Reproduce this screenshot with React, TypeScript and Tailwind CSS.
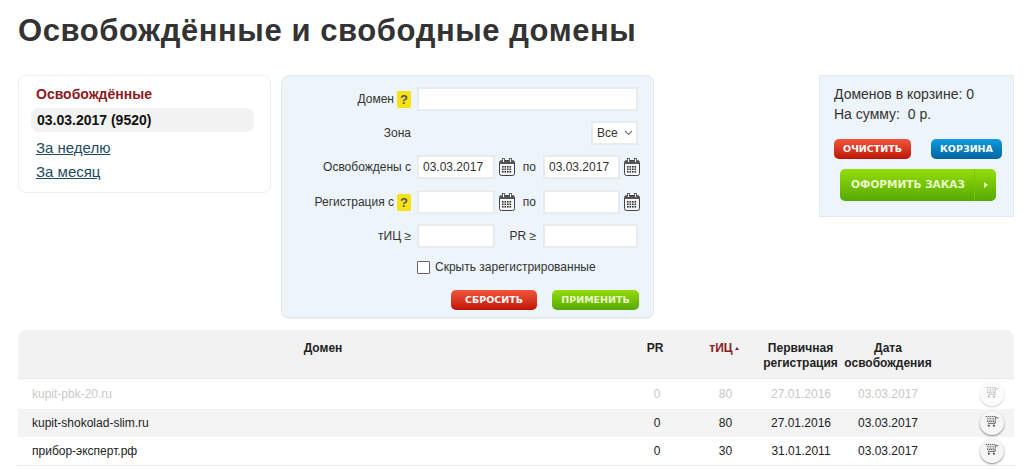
import React from "react";

function Cal() {
  return (
    <svg width="16" height="18" viewBox="0 0 16 18" className="shrink-0">
      <rect x="0.5" y="2.5" width="15" height="15" rx="2" fill="#f4f6f8" stroke="#444" />
      <rect x="1" y="3" width="14" height="3" fill="#555" />
      <rect x="3.5" y="0.5" width="2" height="4" fill="#fff" stroke="#444" strokeWidth="0.8" />
      <rect x="10.5" y="0.5" width="2" height="4" fill="#fff" stroke="#444" strokeWidth="0.8" />
      {[8, 10.5, 13].map((y) =>
        [3, 5.5, 8, 10.5].map((x) => <rect key={`${x}-${y}`} x={x} y={y} width="1.6" height="1.6" fill="#333" />)
      )}
    </svg>
  );
}

function Q() {
  return (
    <span className="inline-flex h-[17px] w-[14px] items-center justify-center rounded-[2px] bg-[#f7e117] text-[13px] font-bold leading-none text-[#555]">
      ?
    </span>
  );
}

function Input({ value, w = "w-[77px]" }: { value?: string; w?: string }) {
  return (
    <div className={`flex h-[24px] ${w} items-center border-2 border-[#e8ecef] bg-white pl-[4px] text-[12px] text-[#333]`}>
      {value}
    </div>
  );
}

function Cart({ faded }: { faded?: boolean }) {
  return (
    <div className={`flex h-[24px] w-[24px] items-center justify-center rounded-full bg-[#f6f6f6] pb-[3px] shadow-[0_1px_2px_rgba(0,0,0,0.45)] ${faded ? "opacity-40" : ""}`}>
      <svg width="14" height="11" viewBox="0 0 15 12">
        <path d="M0.5 0.5H11.5L11 6H2" fill="none" stroke="#555" strokeWidth="1" strokeDasharray="1.5 0.7" />
        <path d="M2 2.5H11M2 4.5H11" stroke="#555" strokeWidth="1" strokeDasharray="1 0.7" />
        <path d="M11.5 2H14.5M11 6.5V8H3" fill="none" stroke="#555" strokeWidth="1" />
        <rect x="3" y="9.5" width="2" height="2" fill="#444" />
        <rect x="8.5" y="9.5" width="2" height="2" fill="#444" />
      </svg>
    </div>
  );
}

const btn = "flex items-center justify-center rounded-[5px] font-['DejaVu_Sans',sans-serif] text-[9.5px] font-bold bg-linear-to-b";
const rowCols = "grid grid-cols-[609px_60px_77px_74px_100px_76px] items-center text-[12px]";

function Row({ name, tic, reg, cls, faded }: { name: string; tic: string; reg: string; cls: string; faded?: boolean }) {
  return (
    <div className={`${rowCols} ${cls} ${faded ? "text-[#c8c8c8]" : "text-[#222]"}`}>
      <div className="pl-[14px]">{name}</div>
      <div className="text-center">0</div>
      <div className="text-center">{tic}</div>
      <div className="text-center">{reg}</div>
      <div className="text-center">03.03.2017</div>
      <div className="flex justify-end pr-[10px]">
        <Cart faded={faded} />
      </div>
    </div>
  );
}

export default function App() {
  return (
    <div className="h-[469px] w-[1032px] overflow-hidden bg-white px-[18px] pt-[12px] font-['Liberation_Sans',Arial,sans-serif] text-[#333]">
      <h1 className="h-[63px] text-[31px] font-bold leading-[38px] tracking-[0.58px] text-[#333]">Освобождённые и свободные домены</h1>

      <div className="flex items-start">
        <div className="h-[118px] w-[253px] rounded-[8px] border border-[#eceef0] px-[12px] pt-[9px]">
          <div className="pl-[5px] text-[14px] font-bold leading-[18px] text-[#8c1a22]">Освобождённые</div>
          <div className="mt-[5px] flex h-[24px] w-[223px] items-center rounded-[8px] bg-[#f2f2f2] pl-[6px] text-[14px] font-bold text-[#111]">
            03.03.2017 (9520)
          </div>
          <div className="mt-[4px] pl-[5px] text-[15px] leading-[24px] text-[#1f4a63] underline">За неделю</div>
          <div className="pl-[5px] text-[15px] leading-[24px] text-[#1f4a63] underline">За месяц</div>
        </div>

        <div className="ml-[10px] h-[243px] w-[373px] rounded-[8px] border border-[#e2eaf1] bg-[#edf4fa] pl-[26px] pt-[11px] text-[12px] text-[#333] shadow-[0_1px_1px_rgba(0,0,0,0.08)]">
          <div className="flex h-[24px] items-center">
            <div className="flex w-[103px] items-center justify-end gap-[3px]">Домен <Q /></div>
            <div className="ml-[6px]"><Input w="w-[221px]" /></div>
          </div>
          <div className="mt-[10px] flex h-[24px] items-center">
            <div className="w-[103px] text-right">Зона</div>
            <div className="ml-[180px] flex h-[24px] w-[47px] items-center justify-between border-2 border-[#e8ecef] bg-white pl-[4px] pr-[3px]">
              Все
              <svg width="9" height="6" viewBox="0 0 9 6"><path d="M1 1l3.5 3.5L8 1" fill="none" stroke="#777" strokeWidth="1.2" /></svg>
            </div>
          </div>
          <div className="mt-[10px] flex h-[24px] items-center">
            <div className="w-[103px] text-right">Освобождены с</div>
            <div className="ml-[6px]"><Input value="03.03.2017" w="w-[78px]" /></div>
            <div className="ml-[4px]"><Cal /></div>
            <div className="w-[21px] text-right">по</div>
            <div className="ml-[7px]"><Input value="03.03.2017" /></div>
            <div className="ml-[4px]"><Cal /></div>
          </div>
          <div className="mt-[11px] flex h-[24px] items-center">
            <div className="flex w-[103px] items-center justify-end gap-[3px]">Регистрация с <Q /></div>
            <div className="ml-[6px]"><Input w="w-[78px]" /></div>
            <div className="ml-[4px]"><Cal /></div>
            <div className="w-[21px] text-right">по</div>
            <div className="ml-[7px]"><Input /></div>
            <div className="ml-[4px]"><Cal /></div>
          </div>
          <div className="mt-[10px] flex h-[24px] items-center">
            <div className="w-[103px] text-right">тИЦ ≥</div>
            <div className="ml-[6px]"><Input w="w-[78px]" /></div>
            <div className="w-[41px] text-right">PR ≥</div>
            <div className="ml-[7px]"><Input w="w-[95px]" /></div>
          </div>
          <div className="ml-[109px] mt-[9px] flex h-[20px] items-center gap-[5px]">
            <span className="h-[13px] w-[13px] rounded-[1px] border border-[#666] bg-white" />
            <span>Скрыть зарегистрированные</span>
          </div>
          <div className="ml-[143px] mt-[13px] flex gap-[15px]">
            <div className={`${btn} h-[20px] w-[86px] from-[#f0543a] to-[#c00f00] text-white`}>СБРОСИТЬ</div>
            <div className={`${btn} h-[20px] w-[87px] from-[#94dd0a] to-[#55a904] text-[#e9f7c8]`}>ПРИМЕНИТЬ</div>
          </div>
        </div>

        <div className="ml-[165px] h-[142px] w-[195px] border border-[#e2eaf1] bg-[#edf4fa] pl-[14px] pt-[8px] text-[14px] text-[#333]">
          <div className="leading-[20px]">Доменов в корзине: 0</div>
          <div className="leading-[20px] whitespace-pre">На сумму:  0 р.</div>
          <div className="mt-[15px] flex">
            <div className={`${btn} h-[20px] w-[77px] from-[#f0543a] to-[#c00f00] text-white`}>ОЧИСТИТЬ</div>
            <div className={`${btn} ml-[20px] h-[20px] w-[71px] from-[#0f9be0] to-[#04649f] text-white`}>КОРЗИНА</div>
          </div>
          <div className="ml-[6px] mt-[10px] flex h-[32px] w-[156px] items-center rounded-[5px] bg-linear-to-b from-[#94dd0a] to-[#55a904] font-['DejaVu_Sans',sans-serif] text-[10.5px] font-bold text-[#e9f7c8]">
            <div className="flex h-full flex-1 items-center justify-center border-r border-[#7cc40a] pl-[2px]">ОФОРМИТЬ ЗАКАЗ</div>
            <div className="flex w-[21px] justify-center">
              <span className="h-0 w-0 border-y-[3px] border-l-[4px] border-y-transparent border-l-[#e9f7c8]" />
            </div>
          </div>
        </div>
      </div>

      <div className="mt-[12px] w-[996px]">
        <div className="grid h-[49px] grid-cols-[610px_54px_81px_75px_100px_76px] rounded-t-[8px] border-b border-[#e8e8e8] bg-[#f2f2f3] pt-[11px] text-[12px] font-bold leading-[15px] text-[#222] [&>div]:text-center">
          <div>Домен</div>
          <div>PR</div>
          <div className="pl-[3px] text-[#8c1a22]">тИЦ<span className="ml-[2px] inline-block h-0 w-0 -translate-y-[2px] border-x-[2.5px] border-b-[3px] border-x-transparent border-b-[#8c1a22]" /></div>
          <div>Первичная регистрация</div>
          <div>Дата освобождения</div>
          <div />
        </div>
        <Row name="kupit-pbk-20.ru" tic="80" reg="27.01.2016" cls="h-[30px] bg-white" faded />
        <Row name="kupit-shokolad-slim.ru" tic="80" reg="27.01.2016" cls="h-[28px] bg-[#f4f4f5]" />
        <Row name="прибор-эксперт.рф" tic="30" reg="31.01.2011" cls="h-[29px] border-b border-[#eeeeee] bg-white" />
      </div>
    </div>
  );
}
